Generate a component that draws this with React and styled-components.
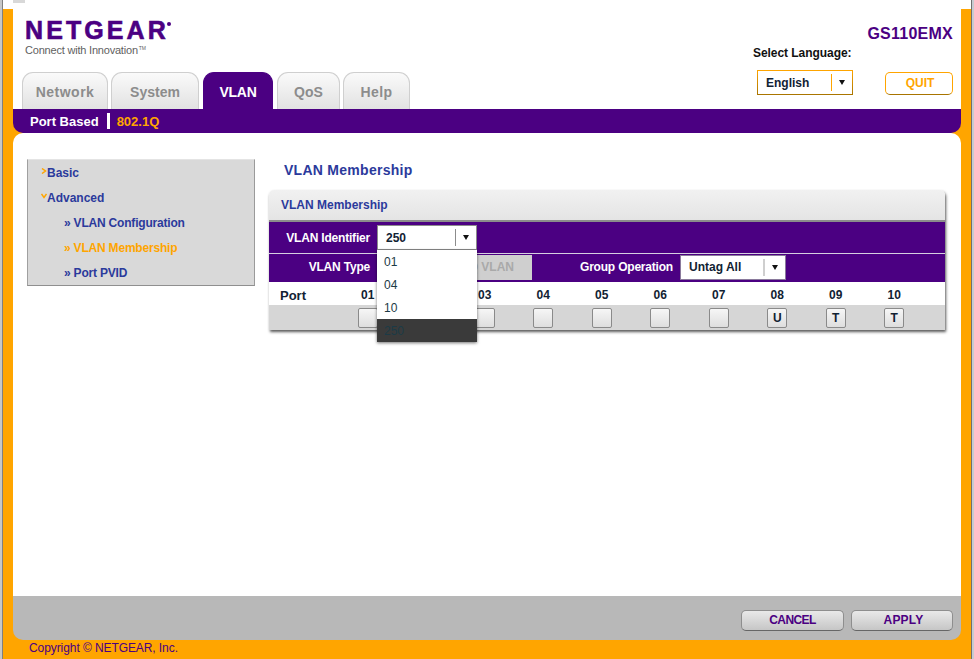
import React from 'react';
import styled, { createGlobalStyle } from 'styled-components';

const PURPLE = '#4b0082';
const ORANGE = '#ffa500';
const NAVY = '#2b3a9c';

const GlobalStyle = createGlobalStyle`
  html, body {
    margin: 0;
    padding: 0;
    height: 100%;
    overflow: hidden;
    background: #fff;
    font-family: "Liberation Sans", Arial, sans-serif;
  }
`;

const Window = styled.div`
  display: flex;
  flex-direction: column;
  height: 659px;
  box-sizing: border-box;
  padding: 0 1px;
  background: #fff;
  border-left: 2px solid #c8c8c8;
  border-right: 2px solid #c8ccd0;
  box-shadow: inset 1px 0 0 #808080, inset -1px 0 0 #707070;
`;

const TopStrip = styled.div`
  flex: none;
  height: 9px;
  padding-left: 10px;
`;

const TopCheck = styled.div`
  width: 12px;
  height: 3px;
  background: #d8d8d8;
`;

const Frame = styled.div`
  flex: 1;
  display: flex;
  flex-direction: column;
  min-height: 0;
  padding: 0 10px;
  background: ${ORANGE};
`;

const Header = styled.header`
  height: 100px;
  flex: none;
  display: flex;
  justify-content: space-between;
  background: #fff;
`;

const Brand = styled.div`
  display: flex;
  flex-direction: column;
  padding-left: 9px;
`;

const Logo = styled.div`
  margin: 10px 0 0 3px;
  height: 22px;
  display: flex;
  align-items: flex-start;
  color: ${PURPLE};
  font-size: 25px;
  line-height: 22px;
  font-weight: 700;
  letter-spacing: 3.1px;
  -webkit-text-stroke: 0.6px ${PURPLE};
`;

const LogoMark = styled.span`
  width: 4px;
  height: 4px;
  margin: 3px 0 0 -2px;
  border-radius: 50%;
  background: ${PURPLE};
`;

const Tagline = styled.div`
  margin: 3px 0 0 3px;
  color: #5f5f5f;
  font-size: 11px;
  line-height: 13px;
  letter-spacing: -0.2px;
  sup {
    font-size: 5px;
    line-height: 0;
    letter-spacing: 0;
    vertical-align: 4px;
    margin-left: 1px;
  }
`;

const Tabs = styled.nav`
  display: flex;
  margin-top: auto;
`;

const Tab = styled.div`
  box-sizing: border-box;
  width: ${p => p.$w}px;
  margin-right: ${p => p.$gap}px;
  height: 37px;
  display: flex;
  align-items: center;
  justify-content: center;
  padding-top: 2px;
  border: 1px solid ${p => (p.$active ? PURPLE : '#cfcfcf')};
  border-bottom: 0;
  border-radius: 11px 11px 0 0;
  background: ${p => (p.$active ? PURPLE : 'linear-gradient(#fafafa, #e2e2e2)')};
  color: ${p => (p.$active ? '#fff' : '#8c8c8c')};
  font-size: 14px;
  font-weight: 700;
  letter-spacing: ${p => p.$spacing || 0}px;
`;

const Tools = styled.div`
  width: 209px;
  padding: 16px 8px 0 0;
  box-sizing: border-box;
  display: flex;
  flex-direction: column;
`;

const Model = styled.div`
  align-self: flex-end;
  color: ${PURPLE};
  font-size: 16px;
  line-height: 18px;
  font-weight: 700;
  letter-spacing: 0.25px;
`;

const LanguageLabel = styled.div`
  margin: 3px 0 0 1px;
  color: #111;
  font-size: 12px;
  line-height: 14px;
  font-weight: 700;
  letter-spacing: -0.05px;
`;

const ToolRow = styled.div`
  display: flex;
  align-items: flex-end;
  justify-content: space-between;
  margin: 10px 0 0 5px;
`;

const QuitButton = styled.button`
  box-sizing: border-box;
  width: 68px;
  height: 23px;
  padding: 0 0 2px 2px;
  border: 1px solid ${ORANGE};
  border-bottom-color: #a87400;
  border-radius: 5px;
  background: #fff;
  color: ${ORANGE};
  font: 700 12px "Liberation Sans", Arial, sans-serif;
`;

const Select = styled.div`
  box-sizing: border-box;
  display: flex;
  align-items: center;
  width: ${p => p.$w}px;
  height: 25px;
  background: #fff;
  border: 1px solid ${p => p.$border};
  color: #123;
  font-size: 12px;
  font-weight: 700;
`;

const LanguageSelect = styled(Select)`
  border-image: linear-gradient(${ORANGE}, #a87400) 1;
`;

const SelectValue = styled.span`
  flex: 1;
  padding-left: 8px;
`;

const SelectArrow = styled.span`
  flex: none;
  width: 20px;
  height: 17px;
  display: flex;
  align-items: center;
  justify-content: center;
  border-left: ${p => p.$weight || 1}px solid ${p => p.$line};
  &::after {
    content: "";
    border-left: 3.5px solid transparent;
    border-right: 3.5px solid transparent;
    border-top: 5px solid #111;
  }
`;

const SubNav = styled.div`
  flex: none;
  height: 24px;
  display: flex;
  align-items: center;
  padding-left: 17px;
  background: ${PURPLE};
  border-radius: 0 0 10px 10px;
  font-size: 13px;
  font-weight: 700;
`;

const SubLink = styled.span`
  color: ${p => (p.$active ? ORANGE : '#fff')};
`;

const SubDivider = styled.span`
  width: 3px;
  height: 16px;
  margin: 0 7px 0 8px;
  background: #fff;
`;

const Body = styled.main`
  flex: 1;
  min-height: 0;
  display: flex;
  align-items: flex-start;
  gap: 14px;
  padding: 26px 16px 0 14px;
  background: #fff;
  border-radius: 10px 10px 0 0;
`;

const SideMenu = styled.aside`
  flex: none;
  box-sizing: border-box;
  width: 228px;
  height: 127px;
  background: #d9d9d9;
  border-top: 1px solid #e4e4e4;
  border-left: 1px solid #a0a0a0;
  border-right: 1px solid #9a9a9a;
  border-bottom: 1px solid #8f8f8f;
`;

const MenuItem = styled.div`
  display: flex;
  align-items: center;
  height: 25px;
  padding-left: ${p => (p.$sub ? 36 : 13)}px;
  color: ${p => (p.$active ? ORANGE : NAVY)};
  font-size: 12px;
  font-weight: 700;
  letter-spacing: ${p => (p.$sub ? '-0.2px' : '0')};
`;

const Caret = styled.svg`
  width: 6px;
  height: 6px;
  margin: -3px 0 0 0;
  flex: none;
`;

const Content = styled.section`
  flex: 1;
  min-width: 0;
`;

const PageTitle = styled.h1`
  margin: 3px 0 0 15px;
  color: ${NAVY};
  font-size: 14px;
  line-height: 17px;
  font-weight: 700;
  letter-spacing: 0.27px;
`;

const Panel = styled.div`
  position: relative;
  margin-top: 11px;
  box-shadow: 1px 2px 3px rgba(0, 0, 0, 0.65);
  border-radius: 5px 5px 0 0;
  background: #fff;
`;

const PanelTitle = styled.div`
  box-sizing: border-box;
  height: 32px;
  padding-left: 12px;
  display: flex;
  align-items: center;
  background: linear-gradient(#f1f1f1, #e4e4e4);
  border-bottom: 2px solid #8c8c8c;
  border-radius: 5px 5px 0 0;
  color: ${NAVY};
  font-size: 12px;
  font-weight: 700;
`;

const FormRow = styled.div`
  box-sizing: border-box;
  display: flex;
  align-items: center;
  height: ${p => p.$h}px;
  padding-bottom: ${p => (p.$line ? 0 : 2)}px;
  background: ${PURPLE};
  border-bottom: ${p => (p.$line ? '1px solid #d6cfe0' : '0')};
  color: #fff;
  font-size: 12px;
  font-weight: 700;
`;

const FieldLabel = styled.span`
  flex: none;
  width: 101px;
  margin-right: 7px;
  text-align: right;
  letter-spacing: -0.2px;
`;

const DisabledButton = styled.span`
  flex: none;
  box-sizing: border-box;
  width: 155px;
  height: 25px;
  padding-right: 18px;
  display: flex;
  align-items: center;
  justify-content: flex-end;
  background: #cfcfcf;
  color: #a9a9a9;
`;

const GroupLabel = styled.span`
  flex: none;
  width: 93px;
  margin: 0 7px 0 48px;
  white-space: nowrap;
  letter-spacing: -0.2px;
`;

const PortGrid = styled.div`
  display: grid;
  grid-template-columns: 69.5px repeat(10, 58.5px) 1fr;
  align-items: center;
`;

const PortHead = styled.div`
  box-sizing: border-box;
  height: 23px;
  display: flex;
  align-items: center;
  justify-content: ${p => (p.$first ? 'flex-start' : 'center')};
  padding: 3px 0 0 ${p => (p.$first ? 11 : 0)}px;
  background: #fff;
  color: #123;
  font-size: ${p => (p.$first ? 13 : 12)}px;
  font-weight: 700;
`;

const PortRow = styled.div`
  grid-column: 1 / -1;
  display: grid;
  grid-template-columns: 69.5px repeat(10, 58.5px) 1fr;
  align-items: center;
  height: 25px;
  background: #d6d6d6;
`;

const PortCell = styled.div`
  display: flex;
  justify-content: center;
`;

const PortButton = styled.button`
  box-sizing: border-box;
  width: 20px;
  height: 20px;
  padding: 0;
  border: 1px solid #8a8a8a;
  border-radius: 2px;
  background: linear-gradient(#f6f6f6, #dedede);
  color: #123;
  font: 700 12px "Liberation Sans", Arial, sans-serif;
`;

const Menu = styled.div`
  position: absolute;
  left: 108px;
  top: 60px;
  width: 100px;
  background: #fff;
  box-shadow: 0 1px 3px rgba(0, 0, 0, 0.55);
`;

const MenuOption = styled.div`
  display: flex;
  align-items: center;
  height: 23px;
  padding-left: 7px;
  background: ${p => (p.$selected ? '#3a3a3a' : '#fff')};
  color: #1c3a46;
  font-size: 12px;
`;

const Actions = styled.footer`
  flex: none;
  box-sizing: border-box;
  height: 44px;
  display: flex;
  justify-content: flex-end;
  align-items: flex-start;
  gap: 7px;
  padding: 14px 8px 0 0;
  background: #b8b8b8;
  border-radius: 0 0 10px 10px;
`;

const ActionButton = styled.button`
  box-sizing: border-box;
  width: ${p => p.$w}px;
  height: 21px;
  padding: 0 0 2px ${p => p.$indent || 0}px;
  border: 1px solid #8e8e8e;
  border-bottom: 1px solid #666;
  border-radius: 5px;
  background: linear-gradient(#e9e9e9, #c6c6c6);
  color: ${PURPLE};
  font: 700 12px "Liberation Sans", Arial, sans-serif;
  letter-spacing: ${p => p.$spacing}px;
`;

const Copyright = styled.div`
  flex: none;
  height: 19px;
  padding: 1px 0 0 16px;
  box-sizing: border-box;
  color: ${PURPLE};
  font-size: 12px;
  line-height: 15px;
  letter-spacing: -0.08px;
`;

const tabs = [
  { label: 'Network', w: 86, gap: 3, spacing: 0.5 },
  { label: 'System', w: 88, gap: 4 },
  { label: 'VLAN', w: 70, gap: 4, spacing: -0.3, active: true },
  { label: 'QoS', w: 63, gap: 3 },
  { label: 'Help', w: 67, gap: 0, spacing: 0.4 },
];

const ports = ['01', '02', '03', '04', '05', '06', '07', '08', '09', '10'];
const portStates = ['', '', '', '', '', '', '', 'U', 'T', 'T'];
const vlanIds = ['01', '04', '10', '250'];

function App() {
  return (
    <>
      <GlobalStyle />
      <Window>
        <TopStrip>
          <TopCheck />
        </TopStrip>
        <Frame>
          <Header>
            <Brand>
              <Logo>
                NETGEAR<LogoMark />
              </Logo>
              <Tagline>
                Connect with Innovation<sup>TM</sup>
              </Tagline>
              <Tabs>
                {tabs.map(t => (
                  <Tab key={t.label} $w={t.w} $gap={t.gap} $spacing={t.spacing} $active={t.active}>
                    {t.label}
                  </Tab>
                ))}
              </Tabs>
            </Brand>
            <Tools>
              <Model>GS110EMX</Model>
              <LanguageLabel>Select Language:</LanguageLabel>
              <ToolRow>
                <LanguageSelect $w={96} $border={ORANGE}>
                  <SelectValue>English</SelectValue>
                  <SelectArrow $line={ORANGE} />
                </LanguageSelect>
                <QuitButton>QUIT</QuitButton>
              </ToolRow>
            </Tools>
          </Header>
          <SubNav>
            <SubLink>Port Based</SubLink>
            <SubDivider />
            <SubLink $active>802.1Q</SubLink>
          </SubNav>
          <Body>
            <SideMenu>
              <MenuItem>
                <Caret viewBox="0 0 6 6">
                  <path d="M1 0.5 L4.5 3 L1 5.5" fill="none" stroke={ORANGE} strokeWidth="1.5" />
                </Caret>
                Basic
              </MenuItem>
              <MenuItem>
                <Caret viewBox="0 0 6 6">
                  <path d="M0.5 1 L3 4.5 L5.5 1" fill="none" stroke={ORANGE} strokeWidth="1.5" />
                </Caret>
                Advanced
              </MenuItem>
              <MenuItem $sub>» VLAN Configuration</MenuItem>
              <MenuItem $sub $active>» VLAN Membership</MenuItem>
              <MenuItem $sub>» Port PVID</MenuItem>
            </SideMenu>
            <Content>
              <PageTitle>VLAN Membership</PageTitle>
              <Panel>
                <PanelTitle>VLAN Membership</PanelTitle>
                <FormRow $h={32} $line>
                  <FieldLabel>VLAN Identifier</FieldLabel>
                  <Select $w={100} $border="#8c8c8c">
                    <SelectValue>250</SelectValue>
                    <SelectArrow $line="#8c8c8c" />
                  </Select>
                </FormRow>
                <FormRow $h={28}>
                  <FieldLabel>VLAN Type</FieldLabel>
                  <DisabledButton>802.1Q VLAN</DisabledButton>
                  <GroupLabel>Group Operation</GroupLabel>
                  <Select $w={106} $border="#8a7a9c">
                    <SelectValue>Untag All</SelectValue>
                    <SelectArrow $line="#cfcfcf" $weight={2} />
                  </Select>
                </FormRow>
                <PortGrid>
                  <PortHead $first>Port</PortHead>
                  {ports.map(p => (
                    <PortHead key={p}>{p}</PortHead>
                  ))}
                  <PortHead />
                  <PortRow>
                    <span />
                    {ports.map((p, i) => (
                      <PortCell key={p}>
                        <PortButton>{portStates[i]}</PortButton>
                      </PortCell>
                    ))}
                  </PortRow>
                </PortGrid>
                <Menu>
                  {vlanIds.map(id => (
                    <MenuOption key={id} $selected={id === '250'}>
                      {id}
                    </MenuOption>
                  ))}
                </Menu>
              </Panel>
            </Content>
          </Body>
          <Actions>
            <ActionButton $w={103} $spacing={-0.6}>CANCEL</ActionButton>
            <ActionButton $w={102} $spacing={0.2} $indent={3}>APPLY</ActionButton>
          </Actions>
          <Copyright>Copyright © NETGEAR, Inc.</Copyright>
        </Frame>
      </Window>
    </>
  );
}

export default App;
